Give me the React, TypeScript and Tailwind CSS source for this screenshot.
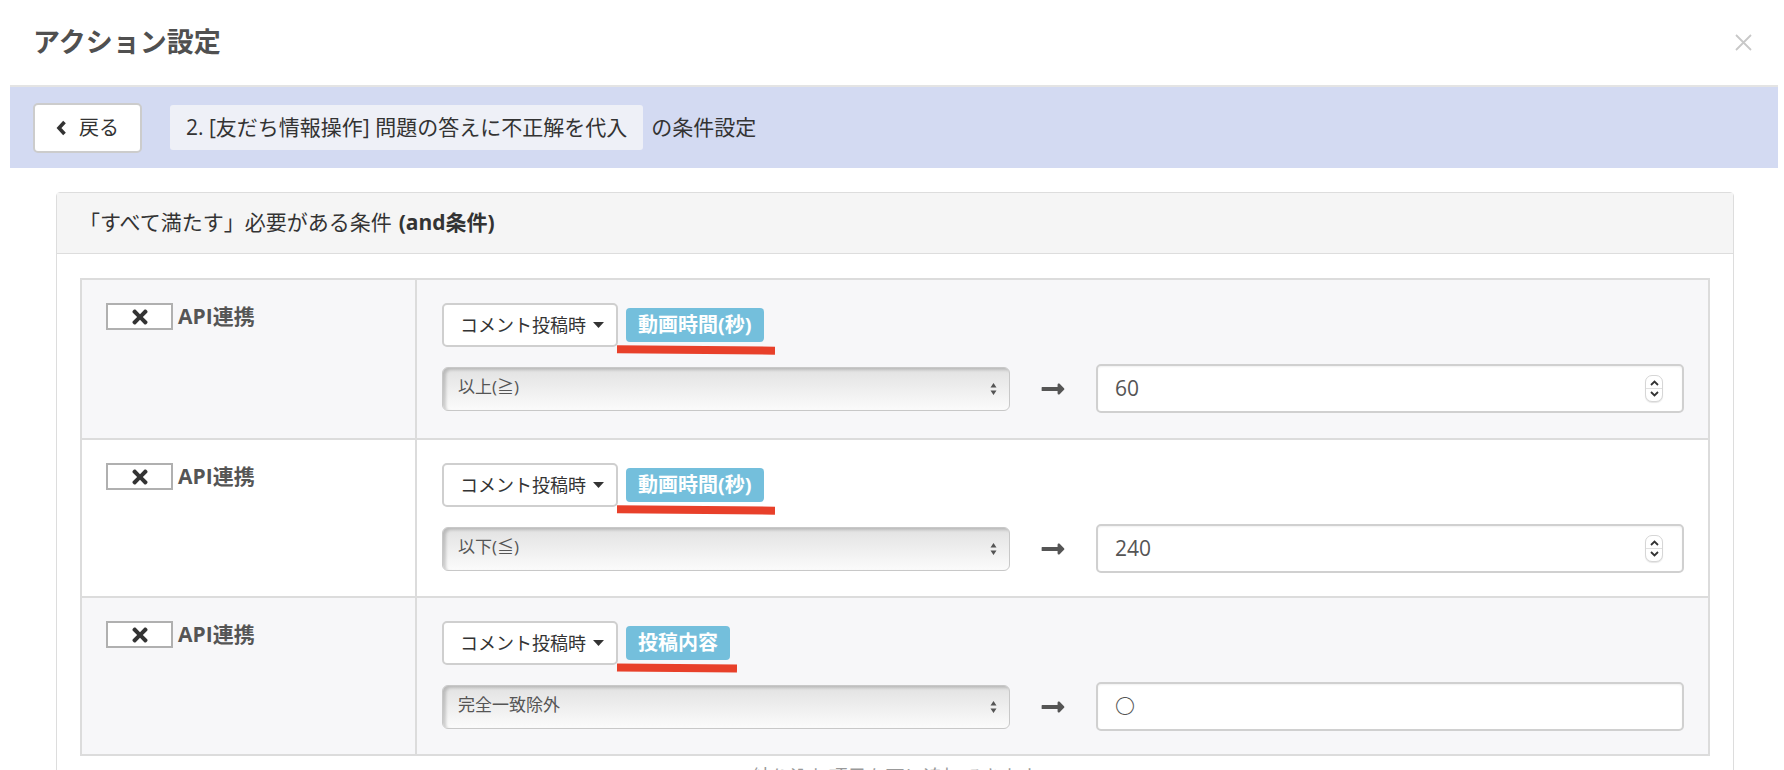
import { FaTimes, FaLongArrowAltRight } from "react-icons/fa";

const rows = [
  { field: "動画時間(秒)", op: "以上(≧)", value: "60", num: true, stripe: true, lineW: 158 },
  { field: "動画時間(秒)", op: "以下(≦)", value: "240", num: true, stripe: false, lineW: 158 },
  { field: "投稿内容", op: "完全一致除外", value: "〇", num: false, stripe: true, lineW: 120 },
];

function Spinner() {
  return (
    <div className="flex h-[27px] w-[18px] flex-col items-center justify-center rounded-[7px] border border-[#d6d6d6] bg-white shadow-[0_1px_1px_rgba(0,0,0,0.1)]">
      <svg width="9" height="6" viewBox="0 0 9 6" className="mb-[2px]">
        <path d="M1 5 L4.5 1.5 L8 5" fill="none" stroke="#333" strokeWidth="1.8" />
      </svg>
      <div className="h-px w-full bg-[#e0e0e0]" />
      <svg width="9" height="6" viewBox="0 0 9 6" className="mt-[2px]">
        <path d="M1 1 L4.5 4.5 L8 1" fill="none" stroke="#333" strokeWidth="1.8" />
      </svg>
    </div>
  );
}

function ConditionRow({ row, first }: { row: (typeof rows)[number]; first: boolean }) {
  return (
    <div className={`flex h-[158px] ${first ? "" : "border-t-2 border-[#dcdcdc]"} ${row.stripe ? "bg-[#f7f7f9]" : "bg-white"}`}>
      <div className="flex w-[335px] items-start gap-[5px] border-r-2 border-[#dcdcdc] pl-[24px] pt-[23px]">
        <button className="flex h-[27px] w-[67px] items-center justify-center border-2 border-[#b0b0b0] bg-white text-[#333]">
          <FaTimes size={22} />
        </button>
        <span className="text-[21px] font-bold leading-[27px] text-[#555]">API連携</span>
      </div>
      <div className="flex-1 pl-[25px] pt-[23px]">
        <div className="relative flex h-[44px] items-center gap-[8px]">
          <button className="flex h-[44px] w-[176px] items-center gap-[7px] rounded-[5px] border-2 border-[#cfcfcf] bg-white pl-[16px] text-[18px] text-[#333]">
            コメント投稿時
            <svg width="11" height="6" viewBox="0 0 11 6">
              <path d="M0 0 H11 L5.5 6 Z" fill="#333" />
            </svg>
          </button>
          <span className="flex h-[34px] items-center rounded-[4px] bg-[#74bfdc] px-[12px] text-[20px] font-bold text-white">
            {row.field}
          </span>
          <div
            className="absolute left-[175px] top-[43px] h-[8px] rotate-[0.5deg] bg-[#e8402a]"
            style={{ width: row.lineW }}
          />
        </div>
        <div className="mt-[17px] flex items-center">
          <div className="flex h-[44px] w-[568px] items-center justify-between rounded-[6px] border border-[#c8c8c8] bg-gradient-to-b from-[#e2e2e2] to-[#fbfbfb] pl-[15px] pr-[12px] text-[17px] text-[#555] shadow-[inset_3px_2px_3px_rgba(0,0,0,0.18)]">
            <span className="-mt-[4px]">{row.op}</span>
            <svg width="7" height="14" viewBox="0 0 7 14">
              <path d="M3.5 1 L6.5 5.5 H0.5 Z M3.5 13 L6.5 8.5 H0.5 Z" fill="#555" />
            </svg>
          </div>
          <div className="flex w-[86px] justify-center text-[#555]">
            <FaLongArrowAltRight size={26} />
          </div>
          <div className="flex h-[49px] w-[588px] items-center justify-between rounded-[5px] border-2 border-[#d0d0d0] bg-white pl-[17px] pr-[19px] text-[21px] text-[#555] shadow-[inset_0_1px_2px_rgba(0,0,0,0.06)]">
            <span className={row.num ? "" : "text-[20px] font-light"}>{row.value}</span>
            {row.num && <Spinner />}
          </div>
        </div>
      </div>
    </div>
  );
}

export default function App() {
  return (
    <div className="h-[770px] w-[1784px] overflow-hidden bg-white font-['Open_Sans','Noto_Sans_CJK_JP',sans-serif] text-[#333]">
      <div className="flex h-[85px] items-center justify-between pl-[33px] pr-[32px]">
        <h1 className="text-[27px] font-bold text-[#505050]">アクション設定</h1>
        <svg width="17" height="17" viewBox="0 0 17 17">
          <path d="M1 1 L16 16 M16 1 L1 16" stroke="#c8c8c8" strokeWidth="1.8" />
        </svg>
      </div>

      <div className="ml-[10px] mr-[6px] flex h-[83px] items-center border-t-2 border-[#e4e4e4] bg-[#d3daf2] pl-[23px]">
        <button className="flex h-[50px] w-[109px] items-center gap-[12px] rounded-[5px] border-2 border-[#cccccc] bg-white pl-[21px] text-[20px] text-[#333]">
          <svg width="11" height="16" viewBox="0 0 11 16">
            <path d="M8.5 2 L3 8 L8.5 14" fill="none" stroke="#333" strokeWidth="3.6" />
          </svg>
          戻る
        </button>
        <span className="ml-[28px] flex h-[45px] items-center rounded-[3px] bg-[#eef0f7] px-[16px] text-[21px] text-[#333]">
          2. [友だち情報操作] 問題の答えに不正解を代入
        </span>
        <span className="ml-[8px] text-[21px] text-[#333]">の条件設定</span>
      </div>

      <div className="ml-[56px] mr-[50px] mt-[24px] rounded-[4px] border border-[#dddddd]">
        <div className="flex h-[61px] items-center border-b border-[#dddddd] bg-[#f5f5f5] pl-[22px] text-[21px] text-[#333]">
          「すべて満たす」必要がある条件
          <span className="ml-[7px] font-bold">(and条件)</span>
        </div>
        <div className="px-[23px] pt-[24px]">
          <div className="border-2 border-[#dcdcdc]">
            {rows.map((row, i) => (
              <ConditionRow key={i} row={row} first={i === 0} />
            ))}
          </div>
          <p className="mt-[7px] text-center text-[19px] text-[#999]">絞り込む項目を下に追加できます</p>
        </div>
      </div>
    </div>
  );
}
